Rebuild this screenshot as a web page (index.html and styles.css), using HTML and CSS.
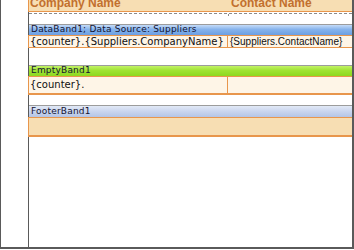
FILE: index.html
```html
<!DOCTYPE html>
<html lang="en">
<head>
  <meta charset="UTF-8">
  <title>Report Designer - Page1</title>
  <link rel="stylesheet" href="styles.css">
</head>
<body>
<div class="frame">
  <div class="gutter"></div>
  <div class="page">
    <!-- column header band, scrolled partly out of view -->
    <div class="row head-row">
      <div class="cell col-left">Company Name</div>
      <div class="cell col-right">Contact Name</div>
    </div>
    <div class="dash-gap"></div>

    <div class="band-title data-title">DataBand1; Data Source: Suppliers</div>
    <div class="row data-row">
      <div class="cell col-left wide">{counter}.{Suppliers.CompanyName}</div>
      <div class="cell col-right narrow">{Suppliers.ContactName}</div>
    </div>

    <div class="band-title empty-title">EmptyBand1</div>
    <div class="row empty-row">
      <div class="cell col-left wide">{counter}.</div>
      <div class="cell col-right"></div>
    </div>

    <div class="band-title footer-title">FooterBand1</div>
    <div class="row footer-row"></div>
  </div>
</div>
</body>
</html>
```

FILE: styles.css
```css
:root {
  --frame:#5a5a5a;
  --orange:#e8964c;
  --cream:#fef5e7;
  --peach:#f7deb3;
}

body {
  margin:0;
  padding:0;
  background:#ffffff;
}

.frame {
  display:flex;
  width:354px;
  height:249px;
  box-sizing:border-box;
  border-left:1px solid var(--frame);
  border-right:2px solid var(--frame);
  border-bottom:2px solid var(--frame);
  overflow:hidden;
  background:#ffffff;
}

.gutter {
  width:27px;
  border-right:1px solid var(--frame);
}

.page {
  flex:1;
  display:flex;
  flex-direction:column;
}

.row {
  display:flex;
  margin-left:-1px;
  border-left:1px solid var(--orange);
}

.cell {
  white-space:nowrap;
  overflow:hidden;
}
.col-left {
  width:199px;
  flex:none;
  border-right:1px solid var(--orange);
  padding-left:1px;
  box-sizing:border-box;
}
.col-right {
  flex:1;
  padding-left:2px;
}

/* header */
.head-row {
  margin-top:-4px;
  height:15px;
  background:var(--peach);
  border-bottom:1px solid var(--orange);
  font-family:"Liberation Sans", Arial, sans-serif;
  font-weight:bold;
  font-size:12px;
  line-height:14px;
  color:#c2702e;
}
.head-row .col-left {
  border-right:0;
}
.head-row .col-right {
  padding-left:3px;
}

.dash-gap {
  margin-top:1px;
  height:10px;
  border-top:1px dashed #8a8a8a;
  /* little tick where the column line meets the dashes */
  background:linear-gradient(#8a8a8a, #8a8a8a) no-repeat 199px 0 / 1px 2px;
}

/* band captions */
.band-title {
  height:10px;
  border-top:1px solid #9c9c9c;
  padding-left:2px;
  font-family:"DejaVu Sans", sans-serif;
  font-size:9px;
  letter-spacing:0.2px;
  line-height:9px;
  color:#141432;
  white-space:nowrap;
}
.data-title {
  background:linear-gradient(#c4dbf8, #86b3ec 45%, #6c9fe2);
}
.empty-title {
  margin-top:17px;
  background:linear-gradient(#c2f266, #9fe332 45%, #8dd81f);
}
.footer-title {
  margin-top:10px;
  height:11px;
  line-height:10px;
  background:linear-gradient(#e2e9f6, #c9d5ee 50%, #b4c5e6);
}

/* band rows */
.data-row {
  height:11px;
  background:var(--cream);
  border-top:1px solid var(--orange);
  border-bottom:1px solid var(--orange);
  font-size:10px;
  line-height:11px;
  color:#101010;
}
.wide {
  font-family:"DejaVu Sans", sans-serif;
  font-size:10px;
}
.narrow {
  font-family:"Liberation Sans", Arial, sans-serif;
  font-size:10px;
}

.empty-row {
  height:16px;
  background:var(--cream);
  border-top:1px solid var(--orange);
  border-bottom:2px solid var(--orange);
  line-height:11px;
  color:#101010;
}
.empty-row .cell {
  padding-top:2px;
}

.footer-row {
  height:17px;
  background:var(--peach);
  border-top:1px solid var(--orange);
  border-bottom:2px solid var(--orange);
}
```
